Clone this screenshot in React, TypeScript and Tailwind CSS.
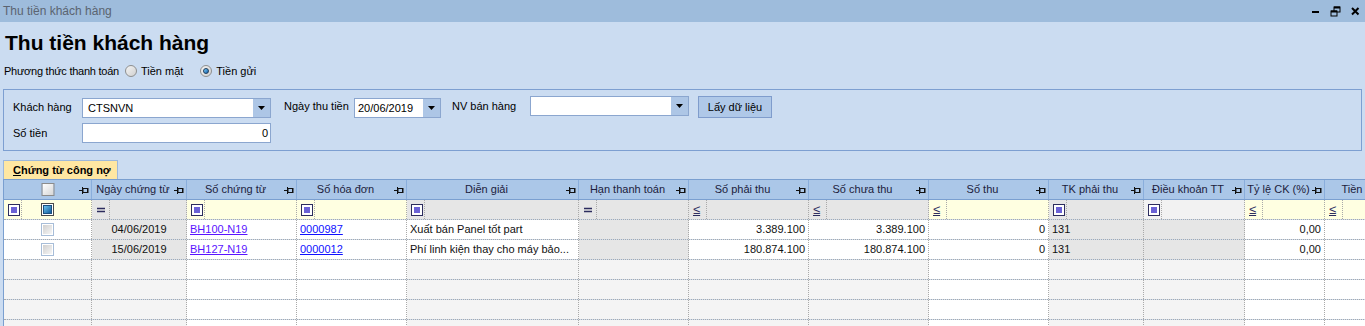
import React from 'react';

type Op = 'sq' | 'eq' | 'le' | 'cb';

interface Col {
  w: number;
  title: string;
  op: Op;
  fbg: string;
  bg: string;
  ebg: string;
  align?: 'left' | 'right' | 'center';
  link?: string;
}

const Y = 'bg-[#ffffe1]';
const D = 'bg-[#e6e6e6]';
const W = 'bg-white';
const G = 'bg-[#f4f4f4]';

const cols: Col[] = [
  { w: 88, title: '', op: 'cb', fbg: Y, bg: W, ebg: G },
  { w: 95, title: 'Ngày chứng từ', op: 'eq', fbg: D, bg: D, ebg: G, align: 'center' },
  { w: 110, title: 'Số chứng từ', op: 'sq', fbg: Y, bg: W, ebg: W, link: 'text-[#5a14ff]' },
  { w: 110, title: 'Số hóa đơn', op: 'sq', fbg: Y, bg: W, ebg: W, link: 'text-[#1010ff]' },
  { w: 172, title: 'Diễn giải', op: 'sq', fbg: D, bg: W, ebg: G },
  { w: 110, title: 'Hạn thanh toán', op: 'eq', fbg: D, bg: D, ebg: G },
  { w: 120, title: 'Số phải thu', op: 'le', fbg: D, bg: W, ebg: G, align: 'right' },
  { w: 120, title: 'Số chưa thu', op: 'le', fbg: D, bg: W, ebg: G, align: 'right' },
  { w: 120, title: 'Số thu', op: 'le', fbg: Y, bg: W, ebg: W, align: 'right' },
  { w: 95, title: 'TK phải thu', op: 'sq', fbg: D, bg: D, ebg: G },
  { w: 101, title: 'Điều khoản TT', op: 'sq', fbg: 'bg-[#f2f2f2]', bg: D, ebg: G },
  { w: 80, title: 'Tỷ lệ CK (%)', op: 'le', fbg: Y, bg: W, ebg: W, align: 'right' },
  { w: 120, title: 'Tiền chiết khấu', op: 'le', fbg: Y, bg: W, ebg: W, align: 'right' },
];

const rows = [
  ['', '04/06/2019', 'BH100-N19', '0000987', 'Xuất bán Panel tốt part', '', '3.389.100', '3.389.100', '0', '131', '', '0,00', ''],
  ['', '15/06/2019', 'BH127-N19', '0000012', 'Phí linh kiện thay cho máy bảo...', '', '180.874.100', '180.874.100', '0', '131', '', '0,00', ''],
];

const Pin = () => (
  <svg width="10" height="8" viewBox="0 0 10 8" className="shrink-0">
    <path d="M0 4.5H3.5M3.5 1V8" stroke="#111" strokeWidth="1" fill="none" />
    <rect x="4" y="2.5" width="5" height="4" stroke="#111" strokeWidth="1" fill="none" />
    <path d="M8.5 3v3" stroke="#111" strokeWidth="1" />
  </svg>
);

const DropArrow = () => (
  <svg width="8" height="4" viewBox="0 0 8 4">
    <path d="M0 0H7L3.5 4Z" fill="#000" />
  </svg>
);

const Radio = ({ checked }: { checked?: boolean }) => (
  <span className="w-[12px] h-[12px] rounded-full border border-[#8e8f8f] bg-linear-to-br from-[#f4f4f4] to-[#d0d0d0] flex items-center justify-center shrink-0">
    {checked && (
      <span className="w-[6px] h-[6px] rounded-full border border-[#1c3c5c] bg-linear-to-br from-[#7fd2ff] to-[#0b5ea8]" />
    )}
  </span>
);

const FilterSquare = () => (
  <span className="w-[12px] h-[12px] border border-[#2c2c5e] bg-white p-[2px] flex">
    <span className="flex-1 bg-[#6b62d6]" />
  </span>
);

const OpIcon = ({ op }: { op: Op }) => {
  if (op === 'eq')
    return (
      <svg width="10" height="6" viewBox="0 0 10 6">
        <path d="M1 1.5H9M1 4.5H9" stroke="#2c2c5e" strokeWidth="1.3" />
      </svg>
    );
  if (op === 'le') return <span className="underline text-[#2c2c5e] text-[13px] leading-none">≤</span>;
  return <FilterSquare />;
};

const Field = ({ w, h = 20, children, drop, right }: { w: number; h?: number; children?: React.ReactNode; drop?: boolean; right?: boolean }) => (
  <div className="flex bg-white border border-[#8ba6cf]" style={{ width: w, height: h }}>
    <span className={`flex-1 flex items-center text-[11px] text-black ${right ? 'justify-end pr-[2px]' : 'pl-[5px]'}`}>{children}</span>
    {drop && (
      <span className="w-[17px] bg-[#adc6e6] flex items-center justify-center">
        <DropArrow />
      </span>
    )}
  </div>
);

export default function App() {
  return (
    <div className="w-[1365px] h-[326px] overflow-hidden bg-[#cbdcf1] font-['Liberation_Sans',Arial,sans-serif] text-[11px] text-[#1e1e1e]">
      {/* title bar */}
      <div className="h-[22px] bg-[#9ebcdc] flex items-center justify-between pl-[3px] pr-[5px]">
        <span className="text-[12px] text-[#5b6470]">Thu tiền khách hàng</span>
        <div className="flex items-center gap-[10px]">
          <svg width="8" height="8" viewBox="0 0 8 8">
            <path d="M0 5H7" stroke="#000" strokeWidth="2" />
          </svg>
          <svg width="11" height="11" viewBox="0 0 11 11">
            <rect x="4" y="1" width="6" height="5" stroke="#000" strokeWidth="1" fill="none" />
            <path d="M4 1.5H10" stroke="#000" strokeWidth="2" />
            <rect x="1" y="5" width="6" height="5" stroke="#000" strokeWidth="1" fill="#9ebcdc" />
            <path d="M1 5.5H7" stroke="#000" strokeWidth="2" />
          </svg>
          <svg width="9" height="9" viewBox="0 0 9 9">
            <path d="M1 1L7.5 7.5M7.5 1L1 7.5" stroke="#000" strokeWidth="2" />
          </svg>
        </div>
      </div>

      <h1 className="mt-[9px] pl-[5px] h-[24px] leading-[24px] text-[21px] font-bold text-black">Thu tiền khách hàng</h1>

      <div className="mt-[7px] h-[18px] pl-[4px] flex items-center text-[11px] text-black">
        <span className="tracking-[-0.25px]">Phương thức thanh toán</span>
        <span className="ml-[6px] flex items-center gap-[4px]">
          <Radio />
          <span>Tiền mặt</span>
        </span>
        <span className="ml-[17px] flex items-center gap-[4px]">
          <Radio checked />
          <span>Tiền gửi</span>
        </span>
      </div>

      {/* filter group */}
      <div className="mt-[9px] ml-[3px] w-[1359px] border border-[#7d9fd1] pl-[9px] pt-[6px] pb-[7px]">
        <div className="h-[22px] flex items-center">
          <span className="w-[69px] text-black">Khách hàng</span>
          <div className="self-end">
            <Field w={189} drop>CTSNVN</Field>
          </div>
          <span className="ml-[13px] w-[70px] text-black -mt-[2px]">Ngày thu tiền</span>
          <div className="self-end">
            <div className="w-[87px] h-[20px] flex bg-white border border-[#8ba6cf]">
              <span className="flex-1 flex items-center pl-[3px] text-[11px] text-black">20/06/2019</span>
              <span className="w-[17px] bg-[#adc6e6] flex items-center justify-center">
                <DropArrow />
              </span>
            </div>
          </div>
          <span className="ml-[11px] w-[78px] text-black -mt-[2px]">NV bán hàng</span>
          <div className="self-start">
            <Field w={159} drop />
          </div>
          <button className="ml-[9px] w-[74px] h-[22px] bg-[#afc8e8] border border-[#7f9ccc] text-[11px] text-black">
            Lấy dữ liệu
          </button>
        </div>
        <div className="mt-[5px] h-[20px] flex items-center">
          <span className="w-[69px] text-black">Số tiền</span>
          <Field w={189} right>0</Field>
        </div>
      </div>

      {/* tab */}
      <div className="mt-[9px] ml-[3px] flex">
        <div className="h-[19px] w-[115px] bg-[#ffe7a2] border border-b-0 border-[#9db8dc] pl-[9px] flex items-center font-bold text-[11px] text-black whitespace-nowrap">
          <span className="underline">C</span>hứng từ công nợ
        </div>
      </div>

      {/* grid */}
      <div className="ml-[3px] border-t border-l border-[#7a9fd0] w-[1362px] overflow-hidden">
        <div className="w-[1500px]">
          {/* header */}
          <div className="flex h-[20px] bg-[#abc7e8] border-b border-[#7a9fd0]">
            {cols.map((c, i) => (
              <div
                key={i}
                className="relative shrink-0 flex items-center border-r border-[#8aaedc] pr-[2px] text-[#1c1c3c] text-[11px]"
                style={{ width: c.w }}
              >
                {i === 0 ? (
                  <>
                    <span className="absolute left-1/2 -translate-x-1/2 w-[13px] h-[13px] border border-[#8c8c8c] bg-linear-to-br from-white to-[#d6d6d6]" />
                    <span className="ml-auto">
                      <Pin />
                    </span>
                  </>
                ) : (
                  <>
                    <span className="flex-1 text-center whitespace-nowrap overflow-hidden">{c.title}</span>
                    <Pin />
                  </>
                )}
              </div>
            ))}
          </div>

          {/* filter row */}
          <div className="flex h-[20px] border-b border-dotted border-[#a9a9a9]">
            {cols.map((c, i) => (
              <div
                key={i}
                className={`shrink-0 flex border-r border-dotted border-[#a9a9a9] ${c.fbg}`}
                style={{ width: c.w }}
              >
                <div className="w-[18px] shrink-0 flex items-center pl-[4px] border-r border-dotted border-[#a9a9a9]">
                  {c.op === 'cb' ? <FilterSquare /> : <OpIcon op={c.op} />}
                </div>
                <div className="flex-1 flex items-center justify-center">
                  {c.op === 'cb' && (
                    <span className="-ml-[18px] w-[13px] h-[13px] border border-[#4a4a4a] p-[1px] bg-white flex">
                      <span className="flex-1 border border-[#1b4f80] bg-linear-to-br from-[#6cc4f0] to-[#0d5c9c]" />
                    </span>
                  )}
                </div>
              </div>
            ))}
          </div>

          {/* data rows */}
          {rows.map((r, ri) => (
            <div key={ri} className="flex h-[20px] border-b border-dotted border-[#a9a9a9]">
              {cols.map((c, i) => (
                <div
                  key={i}
                  className={`shrink-0 flex items-center border-r border-dotted border-[#a9a9a9] px-[3px] text-[11px] text-[#111] whitespace-nowrap overflow-hidden ${c.bg} ${
                    c.align === 'right' ? 'justify-end' : c.align === 'center' ? 'justify-center' : ''
                  }`}
                  style={{ width: c.w }}
                >
                  {i === 0 ? (
                    <span className="mx-auto w-[13px] h-[13px] border border-[#a7bdd8] p-[1px] bg-white flex">
                      <span className="flex-1 bg-linear-to-br from-[#cfcfcf] to-[#f6f6f6]" />
                    </span>
                  ) : c.link ? (
                    <span className={`underline ${c.link}`}>{r[i]}</span>
                  ) : (
                    r[i]
                  )}
                </div>
              ))}
            </div>
          ))}

          {/* empty rows */}
          {[0, 1, 2, 3].map((e) => (
            <div key={e} className="flex h-[20px] border-b border-dotted border-[#a9a9a9]">
              {cols.map((c, i) => (
                <div
                  key={i}
                  className={`shrink-0 border-r border-dotted border-[#a9a9a9] ${c.ebg}`}
                  style={{ width: c.w }}
                />
              ))}
            </div>
          ))}
        </div>
      </div>
    </div>
  );
}
